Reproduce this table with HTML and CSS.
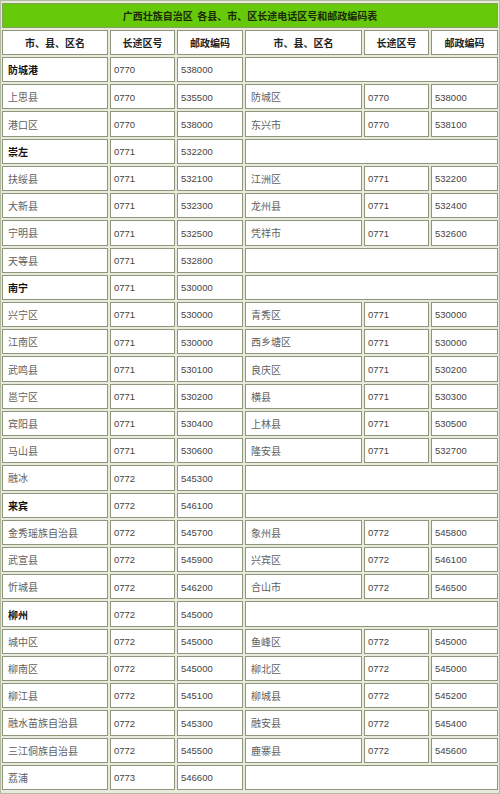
FILE: index.html
```html
<!DOCTYPE html>
<html lang="zh-CN">
<head>
<meta charset="utf-8">
<title>广西壮族自治区 各县、市、区长途电话区号和邮政编码表</title>
<link rel="stylesheet" href="styles.css">
</head>
<body>
<div class="sheet">
  <div class="cell title">广西壮族自治区&nbsp;&nbsp;各县、市、区长途电话区号和邮政编码表</div>

  <div class="cell head">市、县、区名</div><div class="cell head">长途区号</div><div class="cell head">邮政编码</div>
  <div class="cell head">市、县、区名</div><div class="cell head">长途区号</div><div class="cell head">邮政编码</div>

  <div class="cell city">防城港</div><div class="cell num">0770</div><div class="cell num">538000</div><div class="cell empty"></div>
  <div class="cell name">上思县</div><div class="cell num">0770</div><div class="cell num">535500</div><div class="cell name">防城区</div><div class="cell num">0770</div><div class="cell num">538000</div>
  <div class="cell name">港口区</div><div class="cell num">0770</div><div class="cell num">538000</div><div class="cell name">东兴市</div><div class="cell num">0770</div><div class="cell num">538100</div>

  <div class="cell city">崇左</div><div class="cell num">0771</div><div class="cell num">532200</div><div class="cell empty"></div>
  <div class="cell name">扶绥县</div><div class="cell num">0771</div><div class="cell num">532100</div><div class="cell name">江洲区</div><div class="cell num">0771</div><div class="cell num">532200</div>
  <div class="cell name">大新县</div><div class="cell num">0771</div><div class="cell num">532300</div><div class="cell name">龙州县</div><div class="cell num">0771</div><div class="cell num">532400</div>
  <div class="cell name">宁明县</div><div class="cell num">0771</div><div class="cell num">532500</div><div class="cell name">凭祥市</div><div class="cell num">0771</div><div class="cell num">532600</div>
  <div class="cell name">天等县</div><div class="cell num">0771</div><div class="cell num">532800</div><div class="cell empty"></div>

  <div class="cell city">南宁</div><div class="cell num">0771</div><div class="cell num">530000</div><div class="cell empty"></div>
  <div class="cell name">兴宁区</div><div class="cell num">0771</div><div class="cell num">530000</div><div class="cell name">青秀区</div><div class="cell num">0771</div><div class="cell num">530000</div>
  <div class="cell name">江南区</div><div class="cell num">0771</div><div class="cell num">530000</div><div class="cell name">西乡塘区</div><div class="cell num">0771</div><div class="cell num">530000</div>
  <div class="cell name">武鸣县</div><div class="cell num">0771</div><div class="cell num">530100</div><div class="cell name">良庆区</div><div class="cell num">0771</div><div class="cell num">530200</div>
  <div class="cell name">邕宁区</div><div class="cell num">0771</div><div class="cell num">530200</div><div class="cell name">横县</div><div class="cell num">0771</div><div class="cell num">530300</div>
  <div class="cell name">宾阳县</div><div class="cell num">0771</div><div class="cell num">530400</div><div class="cell name">上林县</div><div class="cell num">0771</div><div class="cell num">530500</div>
  <div class="cell name">马山县</div><div class="cell num">0771</div><div class="cell num">530600</div><div class="cell name">隆安县</div><div class="cell num">0771</div><div class="cell num">532700</div>
  <div class="cell name">融冰</div><div class="cell num">0772</div><div class="cell num">545300</div><div class="cell empty"></div>

  <div class="cell city">来宾</div><div class="cell num">0772</div><div class="cell num">546100</div><div class="cell empty"></div>
  <div class="cell name">金秀瑶族自治县</div><div class="cell num">0772</div><div class="cell num">545700</div><div class="cell name">象州县</div><div class="cell num">0772</div><div class="cell num">545800</div>
  <div class="cell name">武宣县</div><div class="cell num">0772</div><div class="cell num">545900</div><div class="cell name">兴宾区</div><div class="cell num">0772</div><div class="cell num">546100</div>
  <div class="cell name">忻城县</div><div class="cell num">0772</div><div class="cell num">546200</div><div class="cell name">合山市</div><div class="cell num">0772</div><div class="cell num">546500</div>

  <div class="cell city">柳州</div><div class="cell num">0772</div><div class="cell num">545000</div><div class="cell empty"></div>
  <div class="cell name">城中区</div><div class="cell num">0772</div><div class="cell num">545000</div><div class="cell name">鱼峰区</div><div class="cell num">0772</div><div class="cell num">545000</div>
  <div class="cell name">柳南区</div><div class="cell num">0772</div><div class="cell num">545000</div><div class="cell name">柳北区</div><div class="cell num">0772</div><div class="cell num">545000</div>
  <div class="cell name">柳江县</div><div class="cell num">0772</div><div class="cell num">545100</div><div class="cell name">柳城县</div><div class="cell num">0772</div><div class="cell num">545200</div>
  <div class="cell name">融水苗族自治县</div><div class="cell num">0772</div><div class="cell num">545300</div><div class="cell name">融安县</div><div class="cell num">0772</div><div class="cell num">545400</div>
  <div class="cell name">三江侗族自治县</div><div class="cell num">0772</div><div class="cell num">545500</div><div class="cell name">鹿寨县</div><div class="cell num">0772</div><div class="cell num">545600</div>
  <div class="cell name">荔浦</div><div class="cell num">0773</div><div class="cell num">546600</div><div class="cell empty"></div>
</div>
</body>
</html>
```

FILE: styles.css
```css
html, body {
  margin: 0;
  padding: 0;
  background: #ffffff;
}

.sheet {
  box-sizing: border-box;
  width: 500px;
  height: 794px;
  display: grid;
  grid-template-columns: 106px 65px 66px 117px 65px 67px;
  grid-template-rows: 25px 25px repeat(27, 1fr);
  gap: 2px;
  padding: 2px 1px 3px 1px;
  border: 1px solid #b3baa2;
  background: #e8ebdc;
  font-family: "Noto Sans CJK SC", "Noto Sans", sans-serif;
}

.cell {
  box-sizing: border-box;
  display: flex;
  align-items: center;
  min-width: 0;
  overflow: hidden;
  white-space: nowrap;
  background: #ffffff;
  border: 1px solid #8d977b;
  padding: 1px 0 0 4px;
  font-size: 10px;
  line-height: 1;
}

.title {
  grid-column: 1 / -1;
  justify-content: center;
  padding-left: 0;
  background: #66c90a;
  border-color: #86a062;
  font-weight: 700;
  color: #1c2a08;
  font-size: 10px;
}

.head {
  justify-content: center;
  padding-left: 0;
  font-weight: 700;
  color: #222222;
  font-size: 10px;
}

.city {
  font-weight: 700;
  color: #111111;
  padding-left: 5px;
}

.name {
  color: #606060;
  padding-left: 5px;
  font-size: 10px;
}

.num {
  font-family: "Liberation Sans", Arial, sans-serif;
  font-size: 9.5px;
  color: #444444;
  padding-left: 3px;
}

.empty {
  grid-column: span 3;
}
```
